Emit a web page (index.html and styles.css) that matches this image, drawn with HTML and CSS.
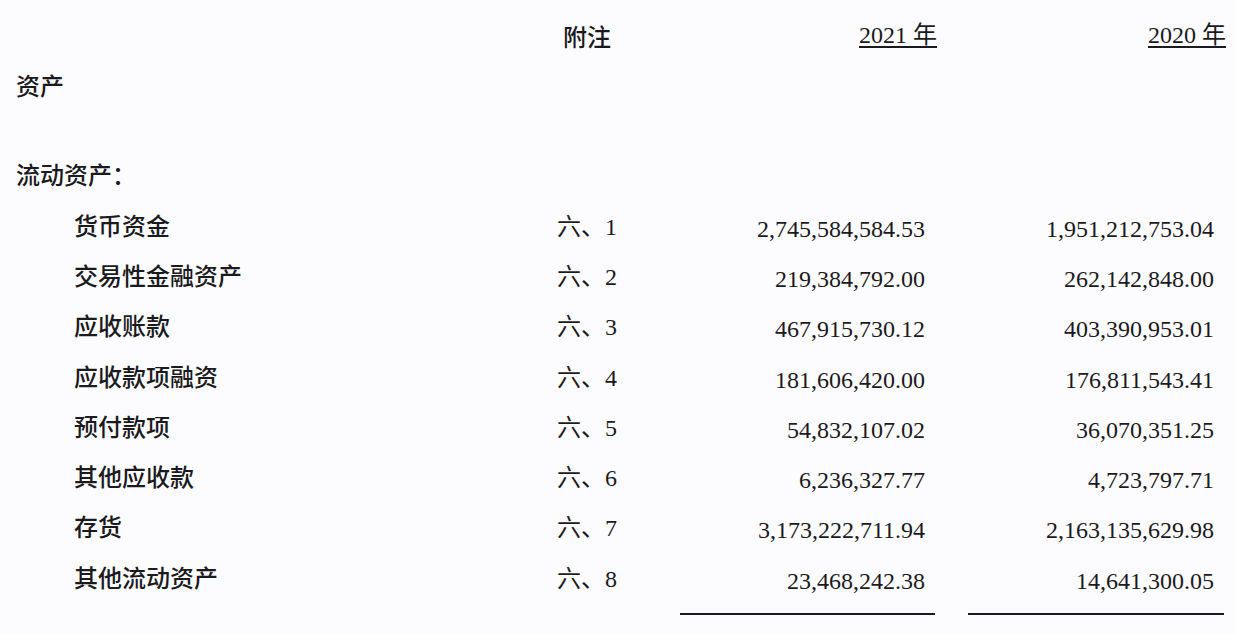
FILE: index.html
```html
<!DOCTYPE html>
<html lang="zh-CN">
<head>
<meta charset="utf-8">
<title>资产负债表</title>
<link rel="stylesheet" href="styles.css">
</head>
<body>
<div class="sheet">
  <div class="row head">
    <div class="label"></div>
    <div class="note head-note">附注</div>
    <div class="gap"></div>
    <div class="amt yr-cell"><span class="yr">2021 年</span></div>
    <div class="gap"></div>
    <div class="amt yr-cell"><span class="yr">2020 年</span></div>
  </div>
  <div class="row section"><div class="label">资产</div></div>
  <div class="row section sub"><div class="label">流动资产：</div></div>

  <div class="row item"><div class="label">货币资金</div><div class="note">六、1</div><div class="gap"></div><div class="amt num">2,745,584,584.53</div><div class="gap"></div><div class="amt num">1,951,212,753.04</div></div>
  <div class="row item"><div class="label">交易性金融资产</div><div class="note">六、2</div><div class="gap"></div><div class="amt num">219,384,792.00</div><div class="gap"></div><div class="amt num">262,142,848.00</div></div>
  <div class="row item"><div class="label">应收账款</div><div class="note">六、3</div><div class="gap"></div><div class="amt num">467,915,730.12</div><div class="gap"></div><div class="amt num">403,390,953.01</div></div>
  <div class="row item"><div class="label">应收款项融资</div><div class="note">六、4</div><div class="gap"></div><div class="amt num">181,606,420.00</div><div class="gap"></div><div class="amt num">176,811,543.41</div></div>
  <div class="row item"><div class="label">预付款项</div><div class="note">六、5</div><div class="gap"></div><div class="amt num">54,832,107.02</div><div class="gap"></div><div class="amt num">36,070,351.25</div></div>
  <div class="row item"><div class="label">其他应收款</div><div class="note">六、6</div><div class="gap"></div><div class="amt num">6,236,327.77</div><div class="gap"></div><div class="amt num">4,723,797.71</div></div>
  <div class="row item"><div class="label">存货</div><div class="note">六、7</div><div class="gap"></div><div class="amt num">3,173,222,711.94</div><div class="gap"></div><div class="amt num">2,163,135,629.98</div></div>
  <div class="row item"><div class="label">其他流动资产</div><div class="note">六、8</div><div class="gap"></div><div class="amt num">23,468,242.38</div><div class="gap"></div><div class="amt num">14,641,300.05</div></div>

  <div class="row rules">
    <div class="label"></div><div class="note"></div><div class="gap"></div>
    <div class="amt"><div class="rule"></div></div>
    <div class="gap"></div>
    <div class="amt"><div class="rule"></div></div>
  </div>
</div>
</body>
</html>
```

FILE: styles.css
```css
html, body {
  margin: 0;
  padding: 0;
  background: #fcfcfe;
}
body {
  width: 1236px;
  height: 634px;
  overflow: hidden;
  color: #1b1a20;
  font-family: "Liberation Serif", "Noto Sans CJK SC", serif;
  font-size: 24px;
}
.sheet {
  padding: 10px 0 0 16px;
}
.row {
  display: grid;
  grid-template-columns: 521px 100px 43px 255px 33px 256px;
  height: 50px;
  align-items: center;
}
.label, .head-note {
  font-family: "Noto Sans CJK SC", sans-serif;
  font-weight: 500;
}
.note {
  text-align: center;
  font-family: "Liberation Serif", "Noto Sans CJK SC", serif;
}
.amt {
  text-align: right;
}
.num {
  padding-right: 10px;
  padding-top: 10px;
}
.yr-cell {
  padding-bottom: 6px;
}
.yr {
  margin-right: -2px;
  text-decoration: underline;
  text-decoration-thickness: 2px;
  text-underline-offset: 3px;
}
.section {
  height: 49px;
}
.section.sub {
  margin-top: 39px;
  height: 51px;
}
.item {
  height: 50.3px;
}
.item .label {
  padding-left: 58px;
}
.rules {
  height: 14px;
  align-items: end;
}
.rule {
  height: 2px;
  background: #1b1a20;
}
```
